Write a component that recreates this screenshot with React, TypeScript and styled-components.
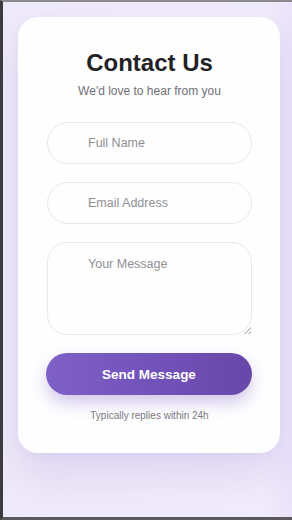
import React from "react";
import styled, { createGlobalStyle } from "styled-components";

const GlobalStyle = createGlobalStyle`
  html, body {
    margin: 0;
    padding: 0;
    height: 100%;
    font-family: "Liberation Sans", Arial, sans-serif;
  }
  #root {
    height: 100%;
  }
`;

const Frame = styled.div`
  box-sizing: border-box;
  height: 520px;
  width: 292px;
  border-top: 2px solid #8a8a8e;
  border-left: 3px solid #3c3c40;
  border-bottom: 3px solid #5a5a5e;
  background: linear-gradient(90deg, #efeaf9 0%, #f1ecfb 90%, #ebe3fa 100%);
  overflow: hidden;
`;

const Card = styled.div`
  box-sizing: border-box;
  width: 262px;
  margin: 15px 0 0 15px;
  padding: 32px 28px 30px 29px;
  background: #fefeff;
  border-radius: 20px;
  box-shadow: 0 22px 40px rgba(130, 100, 200, 0.16), 0 4px 10px rgba(130, 100, 200, 0.05);
  text-align: center;
`;

const Title = styled.h1`
  margin: 0;
  font-size: 24px;
  line-height: 28px;
  font-weight: 700;
  color: #222226;
`;

const Subtitle = styled.p`
  margin: 6px 0 0;
  font-size: 12px;
  line-height: 16px;
  color: #707076;
`;

const Form = styled.form`
  display: flex;
  flex-direction: column;
  gap: 18px;
  margin-top: 23px;
`;

const fieldBase = `
  box-sizing: border-box;
  width: 205px;
  border: 1.5px solid #e8e8ea;
  background: #fefeff;
  font-family: "Liberation Sans", Arial, sans-serif;
  font-size: 12.5px;
  color: #333;
  outline: none;
  padding-left: 40px;
  &::placeholder {
    color: #909095;
  }
`;

const Input = styled.input`
  ${fieldBase}
  height: 42px;
  border-radius: 21px;
`;

const MessageArea = styled.textarea`
  ${fieldBase}
  height: 93px;
  border-radius: 20px;
  padding-top: 13px;
  line-height: 16px;
  resize: vertical;
  &::-webkit-resizer {
    background: linear-gradient(
      135deg,
      transparent 0 76%,
      #c4c4c8 76% 82%,
      transparent 82% 88%,
      #c4c4c8 88% 94%,
      transparent 94%
    );
  }
`;

const SendButton = styled.button`
  width: 206px;
  height: 42px;
  margin-left: -1px;
  border: none;
  border-radius: 21px;
  background: linear-gradient(90deg, #7e60c6 0%, #7252b8 55%, #6747a8 100%);
  color: #fff;
  font-family: "Liberation Sans", Arial, sans-serif;
  font-size: 13.5px;
  font-weight: 700;
  box-shadow: 0 8px 16px rgba(110, 75, 185, 0.3);
  cursor: pointer;
`;

const Note = styled.p`
  margin: 14px 0 0;
  font-size: 10px;
  line-height: 14px;
  color: #7a7a80;
`;

const App: React.FC = () => {
  return (
    <>
      <GlobalStyle />
      <Frame>
        <Card>
          <Title>Contact Us</Title>
          <Subtitle>We'd love to hear from you</Subtitle>
          <Form onSubmit={(e) => e.preventDefault()}>
            <Input type="text" placeholder="Full Name" />
            <Input type="email" placeholder="Email Address" />
            <MessageArea placeholder="Your Message" />
            <SendButton type="submit">Send Message</SendButton>
          </Form>
          <Note>Typically replies within 24h</Note>
        </Card>
      </Frame>
    </>
  );
};

export default App;
